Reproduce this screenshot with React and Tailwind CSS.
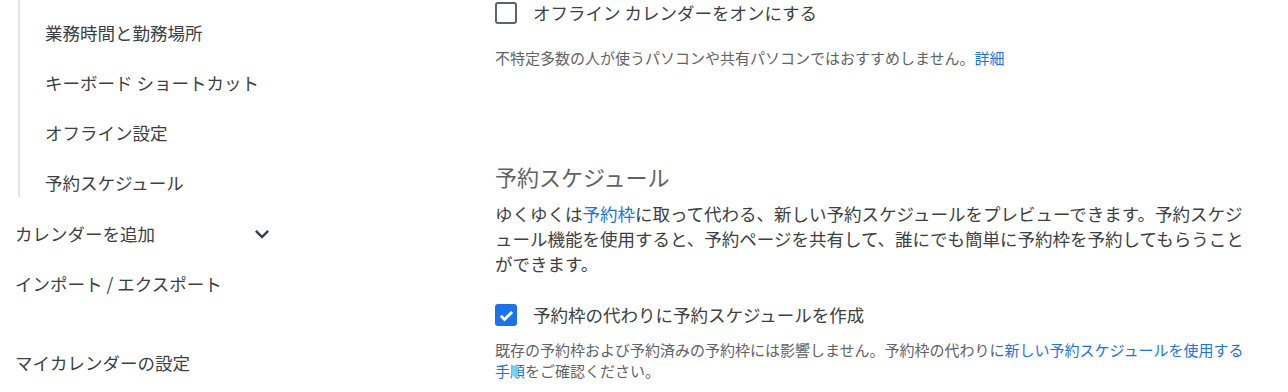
import React from "react";

const font = { fontFamily: '"Noto Sans CJK JP", "Noto Sans", sans-serif' };

const ChevronDown = () => (
  <svg width="28" height="28" viewBox="0 0 24 24" className="fill-[#3c4043]">
    <path d="M16.59 8.59L12 13.17 7.41 8.59 6 10l6 6 6-6z" />
  </svg>
);

const Checkbox = ({ checked }) =>
  checked ? (
    <span className="w-[22px] h-[22px] rounded-[3px] bg-[#1a73e8] flex items-center justify-center shrink-0">
      <svg width="17" height="17" viewBox="0 0 24 24" fill="none">
        <path d="M4 12.5l5.2 5.2L20 7" stroke="#fff" strokeWidth="4" />
      </svg>
    </span>
  ) : (
    <span className="w-[22px] h-[22px] rounded-[3px] border-[2.5px] border-[#5f6368] shrink-0" />
  );

const App = () => {
  const subItems = ["業務時間と勤務場所", "キーボード ショートカット", "オフライン設定", "予約スケジュール"];

  return (
    <div className="w-[1288px] h-[392px] overflow-hidden bg-white flex text-[#3c4043]" style={font}>
      {/* Left nav */}
      <div className="w-[496px] shrink-0">
        <div className="ml-[18px] border-l-2 border-[#e3e4ea] pt-[19px] flex flex-col gap-[22px] w-[262px]">
          {subItems.map((item) => (
            <div key={item} className="h-[28px] flex items-center pl-[25px] text-[17.5px]">
              {item}
            </div>
          ))}
        </div>
        <div className="mt-[12px] pl-[15px] w-[276px]">
          <div className="h-[50px] flex items-center justify-between text-[17.5px]">
            <span>カレンダーを追加</span>
            <ChevronDown />
          </div>
          <div className="h-[50px] flex items-center text-[17.5px]">インポート / エクスポート</div>
          <div className="mt-[29px] h-[50px] flex items-center text-[17.5px]">マイカレンダーの設定</div>
        </div>
      </div>

      {/* Right content */}
      <div className="w-[760px] -ml-px">
        <div className="h-[26px] flex items-center gap-4">
          <Checkbox checked={false} />
          <span className="text-[17.5px]">オフライン カレンダーをオンにする</span>
        </div>
        <p className="mt-[21px] text-[15px] leading-[21px] text-[#5f6368]">
          不特定多数の人が使うパソコンや共有パソコンではおすすめしません。
          <a className="text-[#1a73e8]">詳細</a>
        </p>

        <h2 className="mt-[94px] text-[22px] leading-[28px] text-[#5f6368]">予約スケジュール</h2>
        <p className="mt-[11px] text-[17.5px] leading-[25px]">
          ゆくゆくは<a className="text-[#1a73e8]">予約枠</a>
          に取って代わる、新しい予約スケジュールをプレビューできます。予約スケジュール機能を使用すると、予約ページを共有して、誰にでも簡単に予約枠を予約してもらうことができます。
        </p>

        <div className="mt-[26px] h-[26px] flex items-center gap-4">
          <Checkbox checked />
          <span className="text-[17.5px]">予約枠の代わりに予約スケジュールを作成</span>
        </div>
        <p className="mt-[11px] text-[15px] leading-[21px] text-[#5f6368]">
          既存の予約枠および予約済みの予約枠には影響しません。予約枠の代わりに
          <a className="text-[#1a73e8]">新しい予約スケジュールを使用する手順</a>
          をご確認ください。
        </p>
      </div>
    </div>
  );
};

export default App;
